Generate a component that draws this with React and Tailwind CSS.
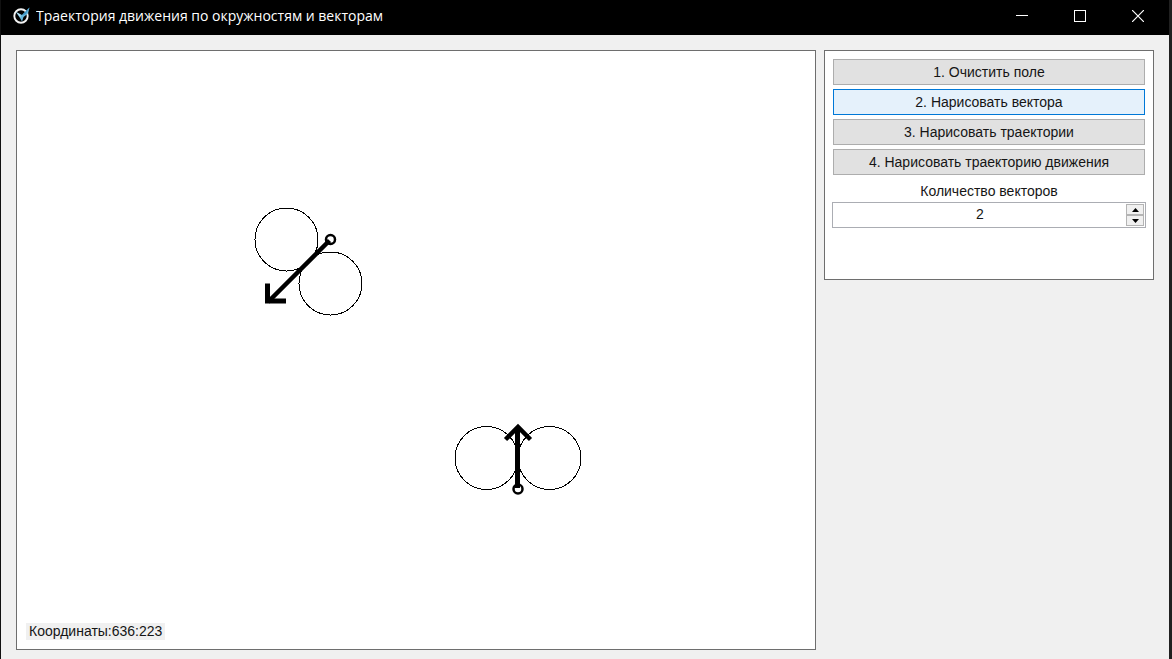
import { useState } from "react";

const ACTIONS = [
  "1. Очистить поле",
  "2. Нарисовать вектора",
  "3. Нарисовать траектории",
  "4. Нарисовать траекторию движения",
];

function AppIcon() {
  return (
    <svg className="h-5 w-5 shrink-0" viewBox="0 0 20 20" fill="none" aria-hidden="true">
      <circle cx="10" cy="10" r="6.7" stroke="#f2f2f2" strokeWidth="1.9" />
      <path d="M5 6L9 8L11 9L18.5 1.5L17 7.5L12.5 11L11 15.5L9 12Z" fill="#67b7dc" />
      <path d="M11 9L18.5 1.5L14.5 8.5Z" fill="#3d94c4" />
      <path d="M5 6L9.5 8.5L9.5 11.5Z" fill="#b9e2f3" />
    </svg>
  );
}

function TitleBar() {
  const control = "flex h-full w-[58px] items-center justify-center text-white";
  return (
    <header className="flex h-[35px] shrink-0 items-center bg-black pr-[2px] pb-1 pl-[10px]">
      <AppIcon />
      <h1 className="ml-[5px] flex-1 truncate font-['Open_Sans','Noto_Sans',sans-serif] text-sm leading-5 text-white">
        Траектория движения по окружностям и векторам
      </h1>
      <div className="flex h-full">
        <button type="button" aria-label="Свернуть" className={control}>
          <svg width="12" height="12" viewBox="0 0 12 12" aria-hidden="true">
            <path d="M0 5.5H12" stroke="currentColor" />
          </svg>
        </button>
        <button type="button" aria-label="Развернуть" className={control}>
          <svg width="12" height="12" viewBox="0 0 12 12" fill="none" aria-hidden="true">
            <rect x="0.5" y="0.5" width="11" height="11" stroke="currentColor" />
          </svg>
        </button>
        <button type="button" aria-label="Закрыть" className={control}>
          <svg width="12" height="12" viewBox="0 0 12 12" aria-hidden="true">
            <path d="M0 0L12 12M12 0L0 12" stroke="currentColor" strokeWidth="1.2" />
          </svg>
        </button>
      </div>
    </header>
  );
}

function Field() {
  return (
    <section className="relative flex min-h-[600px] min-w-0 flex-1 flex-col border border-[#6e6e6e] bg-white">
      <svg className="w-full flex-1" fill="none" stroke="black" role="img" aria-label="Поле векторов">
        <g shapeRendering="crispEdges">
          <circle cx="269.5" cy="188.5" r="31.5" />
          <circle cx="313.5" cy="232.5" r="31.5" />
          <circle cx="469.5" cy="407" r="31.5" />
          <circle cx="532.5" cy="407" r="31.5" />
        </g>
        <circle cx="313.5" cy="188.5" r="4.5" strokeWidth="2.5" />
        <path d="M312.5 189.5L251 251" strokeWidth="4.5" />
        <path d="M250.5 232.5V250H269" strokeWidth="5" />
        <circle cx="501" cy="438" r="4.5" strokeWidth="2.5" />
        <path d="M500.5 437V376" strokeWidth="5" />
        <path d="M488.5 388.5L501 376L513.5 388.5" strokeWidth="4.5" />
      </svg>
      <output className="absolute bottom-[9px] left-[9px] bg-[#f0f0f0] px-[3px] text-sm leading-[17px]">
        Координаты:636:223
      </output>
    </section>
  );
}

function VectorCount() {
  const [count, setCount] = useState(2);
  const step = "flex flex-1 items-center justify-center border border-[#b4b4b4] bg-[#f0f0f0]";
  return (
    <div className="flex flex-col pt-[2px]">
      <label htmlFor="count" className="text-center text-sm leading-5">
        Количество векторов
      </label>
      <div className="-mx-px mt-px flex h-[26px] border border-[#abadb3] bg-white p-px">
        <input
          id="count"
          type="number"
          min="0"
          value={count}
          onChange={(e) => setCount(Number(e.target.value))}
          className="min-w-0 flex-1 appearance-none bg-transparent pb-[2px] text-center text-sm outline-none [-moz-appearance:textfield] [&::-webkit-inner-spin-button]:appearance-none"
        />
        <div className="flex w-[18px] flex-col">
          <button type="button" aria-label="Увеличить" className={step} onClick={() => setCount(count + 1)}>
            <svg width="7" height="4" viewBox="0 0 7 4" aria-hidden="true">
              <path d="M0 4L3.5 0L7 4Z" />
            </svg>
          </button>
          <button type="button" aria-label="Уменьшить" className={step} onClick={() => setCount(Math.max(0, count - 1))}>
            <svg width="7" height="4" viewBox="0 0 7 4" aria-hidden="true">
              <path d="M0 0H7L3.5 4Z" />
            </svg>
          </button>
        </div>
      </div>
    </div>
  );
}

export default function App() {
  const [active, setActive] = useState(1);
  return (
    <div className="flex min-h-screen flex-col border-l border-r-[3px] border-l-[#111111] border-r-[#202020] bg-[#f0f0f0] font-['Liberation_Sans',sans-serif] text-[#151515]">
      <TitleBar />
      <main className="flex flex-1 gap-2 px-[15px] pt-[15px] pb-[9px]">
        <Field />
        <aside className="flex min-h-[230px] w-[330px] shrink-0 flex-col gap-1 self-start border border-[#6e6e6e] bg-white p-2">
          {ACTIONS.map((label, i) => (
            <button
              key={label}
              type="button"
              onClick={() => setActive(i)}
              className={
                i === active
                  ? "h-[26px] border border-[#0078d7] bg-[#e5f1fb] text-sm"
                  : "h-[26px] border border-[#adadad] bg-[#e1e1e1] text-sm"
              }
            >
              {label}
            </button>
          ))}
          <VectorCount />
        </aside>
      </main>
    </div>
  );
}
